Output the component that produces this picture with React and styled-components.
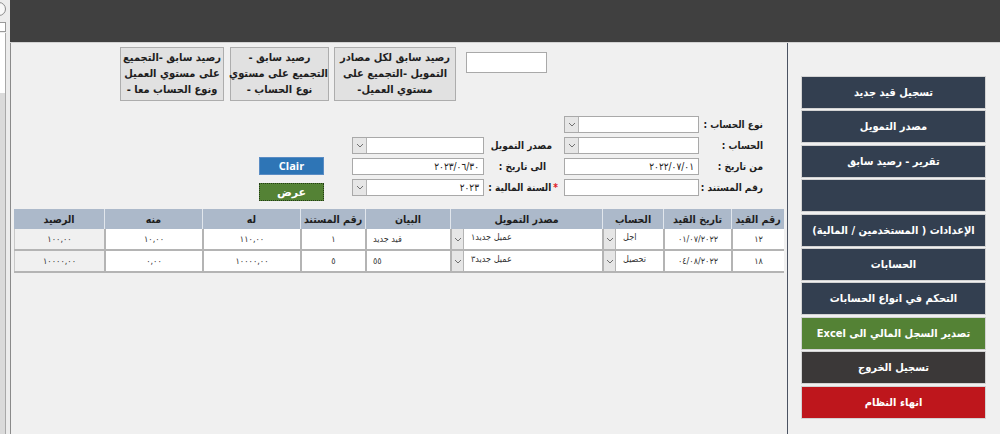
import React from "react";
import styled, { createGlobalStyle } from "styled-components";

const GlobalStyle = createGlobalStyle`
  html, body {
    margin: 0;
    padding: 0;
    background: #f0f0f0;
  }
  body {
    font-family: "Segoe UI", "DejaVu Sans Condensed", "DejaVu Sans", sans-serif;
    overflow: hidden;
  }
  * { box-sizing: border-box; }
`;

const arabic = `"Segoe UI", "DejaVu Sans Condensed", "DejaVu Sans", sans-serif`;

const Screen = styled.div`
  display: flex;
  width: 1000px;
  height: 434px;
  background: #f0f0f0;
`;

/* leftover bit of another window on the far left */
const LeftStrip = styled.div`
  width: 10px;
  flex: none;
  display: flex;
  flex-direction: column;
  overflow: hidden;
  background: #ececec;
`;
const StripCircle = styled.div`
  width: 14px;
  height: 14px;
  margin: 2px 0 0 -8px;
  border: 1px solid #8a8a8a;
  border-radius: 50%;
  background: #f7f7f7;
`;
const StripBox = styled.div`
  width: 6px;
  height: 10px;
  margin-top: 6px;
  border: 1px solid #9a9a9a;
  border-left: none;
  background: #fff;
`;
const StripPanel = styled.div`
  flex: 1;
  width: 6px;
  margin-top: 1px;
  border-right: 1px solid #a8a8a8;
  background: linear-gradient(#fff 0, #fff 60px, #dadada 60px);
`;

const Main = styled.div`
  width: 990px;
  display: flex;
  flex-direction: column;
`;

const TopBar = styled.div`
  height: 43px;
  flex: none;
  background: #404040;
  border-bottom: 1px solid #d2d2d2;
`;

const Body = styled.div`
  flex: 1;
  display: flex;
`;

const Content = styled.div`
  width: 778px;
  flex: none;
  border-left: 1px solid #8a8a8a;
  border-right: 1px solid #4b5362;
  direction: rtl;
  display: flex;
  flex-direction: column;
`;

const TopRow = styled.div`
  display: flex;
  align-items: flex-start;
  padding: 4px 240px 0 0;
`;

const SmallInput = styled.div`
  width: 81px;
  height: 21px;
  margin: 5px 0 0 10px;
  background: #fff;
  border: 1px solid #a9a9a9;
`;

const ReportButton = styled.button`
  width: ${(p) => p.$w}px;
  height: 54px;
  margin-left: ${(p) => p.$gap || 0}px;
  padding: 0;
  background: #e1e1e1;
  border: 1px solid #adadad;
  color: #1e1e1e;
  font-family: ${arabic};
  font-size: 11px;
  font-weight: bold;
  line-height: 16px;
  white-space: nowrap;
  direction: rtl;
  text-align: center;
`;

const Form = styled.div`
  display: grid;
  grid-template-columns: 64px 135px 80px 132px 93px;
  grid-auto-rows: 17px;
  row-gap: 4px;
  margin: 15px 24px 0 0;
  width: 504px;
`;

const Label = styled.div`
  grid-column: ${(p) => p.$col || "auto"};
  font-family: ${arabic};
  font-size: 10px;
  font-weight: bold;
  color: #1e1e1e;
  white-space: nowrap;
  line-height: 17px;
  padding-right: ${(p) => p.$pr || 0}px;
  text-align: right;
`;

const Star = styled.span`
  color: #e0201c;
  margin-left: 2px;
`;

const Field = styled.div`
  display: flex;
  height: 17px;
  background: #fff;
  border: 1px solid #a9a9a9;
  align-items: center;
  padding-right: 4px;
  font-size: 10px;
  color: #222;
`;

const FieldText = styled.div`
  flex: 1;
  text-align: right;
`;

const Ltr = styled.span`
  direction: ltr;
  unicode-bidi: isolate;
`;

const DropBtn = styled.div`
  width: ${(p) => p.$w || 14}px;
  align-self: stretch;
  display: flex;
  align-items: center;
  justify-content: center;
  background: #e6e6e6;
  border-right: 1px solid #b4b4b4;
`;

const Chevron = () => (
  <svg width="8" height="5" viewBox="0 0 8 5">
    <path d="M1 1 L4 4 L7 1" fill="none" stroke="#707070" strokeWidth="1" />
  </svg>
);

const Cell = styled.div`
  grid-column: ${(p) => p.$col};
  display: flex;
  justify-content: flex-end;
  align-items: flex-start;
`;

const ActionButton = styled.button`
  width: 65px;
  height: 18px;
  margin-top: ${(p) => p.$mt || 0}px;
  padding: 0;
  color: #fff;
  font-family: "Segoe UI", "Open Sans", "DejaVu Sans", sans-serif;
  font-size: 11px;
  font-weight: bold;
  line-height: 14px;
  background: ${(p) => p.$bg};
  border: 1px ${(p) => (p.$dotted ? "dotted #243d16" : "solid #5a8cc4")};
`;

const Table = styled.div`
  width: 770px;
  margin: 13px 3px 0 0;
  display: flex;
  flex-direction: column;
`;

const cols = "53px 68px 61px 152px 85px 65px 98px 98px 90px";

const HeadRow = styled.div`
  display: grid;
  grid-template-columns: ${cols};
  height: 20px;
  background: #acb9ca;
`;

const HeadCell = styled.div`
  text-align: center;
  font-family: ${arabic};
  font-size: 10.5px;
  font-weight: bold;
  line-height: 20px;
  color: #1e1e1e;
  white-space: nowrap;
  overflow: hidden;
  border-left: 1px solid #e1e6ec;
  &:last-child { border-left: none; }
`;

const DataRow = styled.div`
  display: grid;
  grid-template-columns: ${cols};
  height: 22px;
  border-bottom: 2px solid #b4b4b4;
`;

const DataCell = styled.div`
  display: flex;
  align-items: center;
  justify-content: ${(p) => (p.$left ? "flex-end" : "center")};
  padding-left: ${(p) => (p.$left ? 6 : 0)}px;
  background: ${(p) => (p.$grey ? "#f0f0f0" : "#fff")};
  border-left: 2px solid #b4b4b4;
  font-size: 9px;
  color: #333;
  white-space: nowrap;
  &:last-child { border-left: 1px solid #c8c8c8; }
`;

const ComboCell = styled.div`
  display: flex;
  flex-direction: row-reverse;
  align-items: stretch;
  background: #fff;
  border-left: 2px solid #b4b4b4;
  font-size: 9px;
  color: #333;
  white-space: nowrap;
`;

const ComboText = styled.div`
  flex: 1;
  padding: 3px 0 0 7px;
  direction: rtl;
  text-align: left;
`;

const Sidebar = styled.div`
  width: 212px;
  flex: none;
  display: flex;
  flex-direction: column;
  gap: 1.4px;
  padding: 33px 14px 0 13px;
`;

const SideButton = styled.button`
  height: 33px;
  min-width: 0;
  padding: 0;
  overflow: hidden;
  border: 1px solid #d3d3d3;
  background: ${(p) => p.$bg || "#333f50"};
  color: #fff;
  font-family: ${arabic};
  font-size: 11px;
  font-weight: bold;
  white-space: nowrap;
  direction: rtl;
`;

const sideItems = [
  { t: "تسجيل قيد جديد" },
  { t: "مصدر التمويل" },
  { t: "تقرير - رصيد سابق" },
  { t: "" },
  { t: "الإعدادات ( المستخدمين / المالية)" },
  { t: "الحسابات" },
  { t: "التحكم في انواع الحسابات" },
  { t: "تصدير السجل المالي الى Excel", bg: "#548235" },
  { t: "تسجيل الخروج", bg: "#3b3838" },
  { t: "انهاء النظام", bg: "#be161c" },
];

const rows = [
  {
    no: "١٢",
    date: "٠١/٠٧/٢٠٢٢",
    acc: "اجل",
    src: "عميل جديد١",
    desc: "قيد جديد",
    doc: "١",
    lah: "١١٠,٠٠",
    minh: "١٠,٠٠",
    bal: "١٠٠,٠٠",
  },
  {
    no: "١٨",
    date: "٠٤/٠٨/٢٠٢٢",
    acc: "تحصيل",
    src: "عميل جديد٣",
    desc: "٥٥",
    doc: "٥",
    lah: "١٠٠٠٠,٠٠",
    minh: "٠,٠٠",
    bal: "١٠٠٠٠,٠٠",
  },
];

const heads = [
  "رقم القيد",
  "تاريخ القيد",
  "الحساب",
  "مصدر التمويل",
  "البيان",
  "رقم المستند",
  "له",
  "منه",
  "الرصيد",
];

const Combo = ({ text }) => (
  <ComboCell>
    <DropBtn $w={12}>
      <Chevron />
    </DropBtn>
    <ComboText>{text}</ComboText>
  </ComboCell>
);

const Select = ({ children }) => (
  <Field>
    <FieldText>{children}</FieldText>
    <DropBtn>
      <Chevron />
    </DropBtn>
  </Field>
);

const App = () => {
  return (
    <>
      <GlobalStyle />
      <Screen>
        <LeftStrip>
          <StripCircle />
          <StripBox />
          <StripPanel />
        </LeftStrip>
        <Main>
          <TopBar />
          <Body>
            <Content>
              <TopRow>
                <SmallInput />
                <ReportButton $w={122} $gap={5}>
                  رصيد سابق لكل مصادر
                  <br />
                  التمويل -التجميع على
                  <br />
                  مستوي العميل-
                </ReportButton>
                <ReportButton $w={99} $gap={6}>
                  رصيد سابق -
                  <br />
                  التجميع على مستوي
                  <br />
                  نوع الحساب -
                </ReportButton>
                <ReportButton $w={104}>
                  رصيد سابق -التجميع
                  <br />
                  على مستوي العميل
                  <br />
                  ونوع الحساب معا -
                </ReportButton>
              </TopRow>

              <Form>
                <Label $col={1}>نوع الحساب :</Label>
                <Select />

                <Label $col={1}>الحساب :</Label>
                <Select />
                <Label $pr={12}>مصدر التمويل</Label>
                <Select />

                <Label $col={1}>من تاريخ :</Label>
                <Field>
                  <FieldText>
                    <Ltr>٢٠٢٢/٠٧/٠١</Ltr>
                  </FieldText>
                </Field>
                <Label $pr={18}>الى تاريخ :</Label>
                <Field>
                  <FieldText>
                    <Ltr>٢٠٢٣/٠٦/٣٠</Ltr>
                  </FieldText>
                </Field>
                <Cell $col={5}>
                  <ActionButton $bg="#2e75b6" $mt={-1}>
                    Clair
                  </ActionButton>
                </Cell>

                <Label $col={1}>رقم المستند :</Label>
                <Field />
                <Label $pr={6}>
                  <Star>*</Star>السنة المالية :
                </Label>
                <Select>٢٠٢٣</Select>
                <Cell $col={5}>
                  <ActionButton $bg="#548235" $dotted $mt={4}>
                    عرض
                  </ActionButton>
                </Cell>
              </Form>

              <Table>
                <HeadRow>
                  {heads.map((h) => (
                    <HeadCell key={h}>{h}</HeadCell>
                  ))}
                </HeadRow>
                {rows.map((r) => (
                  <DataRow key={r.no}>
                    <DataCell>{r.no}</DataCell>
                    <DataCell>
                      <Ltr>{r.date}</Ltr>
                    </DataCell>
                    <Combo text={r.acc} />
                    <Combo text={r.src} />
                    <DataCell $left>{r.desc}</DataCell>
                    <DataCell>{r.doc}</DataCell>
                    <DataCell>
                      <Ltr>{r.lah}</Ltr>
                    </DataCell>
                    <DataCell>
                      <Ltr>{r.minh}</Ltr>
                    </DataCell>
                    <DataCell $grey>
                      <Ltr>{r.bal}</Ltr>
                    </DataCell>
                  </DataRow>
                ))}
              </Table>
            </Content>

            <Sidebar>
              {sideItems.map((s, i) => (
                <SideButton key={i} $bg={s.bg}>
                  {s.t}
                </SideButton>
              ))}
            </Sidebar>
          </Body>
        </Main>
      </Screen>
    </>
  );
};

export default App;
